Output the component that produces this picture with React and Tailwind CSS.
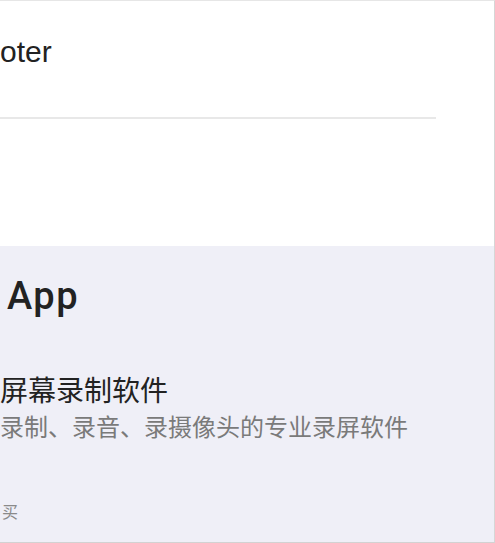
import React from "react";

export default function App() {
  return (
    <div className="w-[495px] h-[543px] flex flex-col overflow-hidden border-t border-r border-b border-t-[#e6e6e6] border-r-[#d6d6d6] border-b-[#d2d2d2] bg-white">
      {/* Footer section (white) */}
      <section className="h-[245px] shrink-0 flex flex-col bg-white pt-[33px]">
        <h2 className="text-[30px] leading-[36px] font-normal text-[#222] whitespace-nowrap font-['Liberation_Sans',Arial,sans-serif]">
          oter
        </h2>
        <div className="mt-[47px] w-[436px] h-[2px] bg-[#e8e8e8]" />
      </section>

      {/* App section (lavender) */}
      <section className="flex-1 flex flex-col bg-[#efeff7] pt-[26px]">
        <h2 className="pl-[7px] text-[38px] leading-[48px] tracking-[1.5px] font-medium text-[#222] whitespace-nowrap font-['Roboto',sans-serif]">
          App
        </h2>
        <h3 className="mt-[58px] text-[28px] leading-[28px] font-normal text-[#222] whitespace-nowrap font-['Liberation_Sans','Noto_Sans_CJK_SC',sans-serif]">
          屏幕录制软件
        </h3>
        <p className="mt-[10px] text-[24px] leading-[24px] text-[#7a7a7a] whitespace-nowrap font-['Liberation_Sans','Noto_Sans_CJK_SC',sans-serif]">
          录制、录音、录摄像头的专业录屏软件
        </p>
        <p className="mt-[65px] pl-[2px] text-[16px] leading-[16px] text-[#8a8a8a] whitespace-nowrap font-['Liberation_Sans','Noto_Sans_CJK_SC',sans-serif]">
          买
        </p>
      </section>
    </div>
  );
}
